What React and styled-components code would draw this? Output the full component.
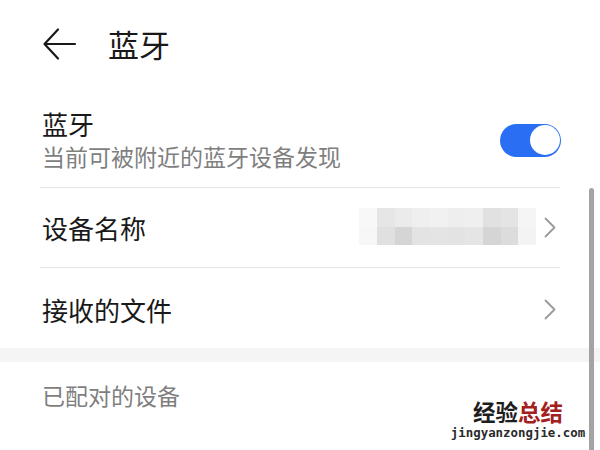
import React from "react";
import styled, { createGlobalStyle } from "styled-components";

const Global = createGlobalStyle`
  html, body { margin: 0; padding: 0; background: #ffffff; }
  body { font-family: "Noto Sans CJK SC", "Noto Sans", sans-serif; }
  * { box-sizing: border-box; }
`;

const Page = styled.div`
  position: relative;
  width: 600px;
  height: 450px;
  overflow: hidden;
  background: #fff;
  color: #191919;
`;

const Header = styled.header`
  display: flex;
  align-items: center;
  height: 88px;
  padding-left: 43px;
`;

const BackButton = styled.button`
  display: flex;
  align-items: center;
  justify-content: center;
  width: 34px;
  height: 32px;
  padding: 0;
  border: none;
  background: transparent;
  color: #191919;
`;

const Title = styled.h1`
  margin: 0 0 0 31px;
  font-size: 31px;
  font-weight: 400;
  line-height: 40px;
`;

const List = styled.div`
  display: flex;
  flex-direction: column;
  padding: 0 40px;
`;

const Row = styled.div`
  display: flex;
  align-items: center;
  justify-content: space-between;
  height: ${(p) => p.$h}px;
  padding: ${(p) => p.$pad || "0"};
  border-bottom: ${(p) => (p.$divider ? "1px solid #e6e6e6" : "none")};
`;

const TextBlock = styled.div`
  display: flex;
  flex-direction: column;
  padding-left: 2px;
`;

const Label = styled.div`
  font-size: 26px;
  line-height: 32px;
  color: #191919;
`;

const Sub = styled.div`
  font-size: 23px;
  line-height: 32px;
  color: #7f7f7f;
`;

const Toggle = styled.div`
  position: relative;
  width: 61px;
  height: 33px;
  border-radius: 17px;
  background: #2a6ef4;
  margin-right: -1px;
`;

const Knob = styled.div`
  position: absolute;
  right: 1.5px;
  top: 1.5px;
  width: 30px;
  height: 30px;
  border-radius: 50%;
  background: #fff;
`;

const Trailing = styled.div`
  display: flex;
  align-items: center;
  gap: 8px;
`;

const Blur = styled.div`
  display: grid;
  grid-template-columns: repeat(10, 17.7px);
  grid-template-rows: 19px 18px;
  margin-top: -2px;
`;

const Cell = styled.div`
  background: ${(p) => p.$c};
`;

const Chevron = styled.svg`
  width: 12px;
  height: 21px;
  margin-right: 4px;
  display: block;
`;

const Band = styled.div`
  height: 14px;
  background: #f5f5f5;
`;

const SectionTitle = styled.div`
  padding: 17px 0 0 42px;
  font-size: 23px;
  line-height: 32px;
  color: #7f7f7f;
`;

const Scrollbar = styled.div`
  position: absolute;
  left: 589px;
  top: 188px;
  width: 5px;
  bottom: 0;
  border-radius: 3px 3px 0 0;
  background: #a3a3a3;
`;

const Watermark = styled.div`
  position: absolute;
  left: 448px;
  top: 399px;
  width: 140px;
  display: flex;
  flex-direction: column;
  align-items: center;
  gap: 3px;
`;

const WmTitle = styled.div`
  font-size: 22.5px;
  line-height: 24px;
  font-weight: 700;
  color: #1e1e1e;
  & span { color: #a32020; }
`;

const WmUrl = styled.div`
  font-family: "DejaVu Sans Mono", "Liberation Mono", monospace;
  font-size: 12.4px;
  line-height: 13px;
  font-weight: 700;
  color: #2a2a2a;
`;

const blurTop = ["#f8f8f8", "#e6e6e6", "#ebebeb", "#efefef", "#f1f1f1", "#eeeeee", "#efefef", "#e1e1e1", "#e4e4e4", "#f5f5f5"];
const blurBottom = ["#f7f7f7", "#e0e0e0", "#d5d5d5", "#e3e3e3", "#e4e4e4", "#e3e3e3", "#e5e5e5", "#d5d5d5", "#dcdcdc", "#f3f3f3"];

function ChevronRight() {
  return (
    <Chevron viewBox="0 0 12 21" fill="none">
      <path d="M1.5 1.5 L10.5 10.5 L1.5 19.5" stroke="#9a9a9a" strokeWidth="1.8" strokeLinecap="round" strokeLinejoin="round" />
    </Chevron>
  );
}

export default function App() {
  return (
    <Page>
      <Global />
      <Header>
        <BackButton aria-label="返回">
          <svg width="34" height="32" viewBox="0 0 34 32" fill="none">
            <path d="M15 1.5 L1.5 16 L15 30.5 M1.5 16 H32" stroke="#191919" strokeWidth="2.2" strokeLinecap="round" strokeLinejoin="round" />
          </svg>
        </BackButton>
        <Title>蓝牙</Title>
      </Header>
      <List>
        <Row $h={100} $pad="5px 0 0 0" $divider>
          <TextBlock>
            <Label>蓝牙</Label>
            <Sub>当前可被附近的蓝牙设备发现</Sub>
          </TextBlock>
          <Toggle>
            <Knob />
          </Toggle>
        </Row>
        <Row $h={80} $divider>
          <TextBlock>
            <Label>设备名称</Label>
          </TextBlock>
          <Trailing>
            <Blur>
              {blurTop.map((c, i) => <Cell key={"t" + i} $c={c} />)}
              {blurBottom.map((c, i) => <Cell key={"b" + i} $c={c} />)}
            </Blur>
            <ChevronRight />
          </Trailing>
        </Row>
        <Row $h={80} $pad="3px 0 0 0">
          <TextBlock>
            <Label>接收的文件</Label>
          </TextBlock>
          <ChevronRight />
        </Row>
      </List>
      <Band />
      <SectionTitle>已配对的设备</SectionTitle>
      <Scrollbar />
      <Watermark>
        <WmTitle>经验<span>总结</span></WmTitle>
        <WmUrl>jingyanzongjie.com</WmUrl>
      </Watermark>
    </Page>
  );
}
